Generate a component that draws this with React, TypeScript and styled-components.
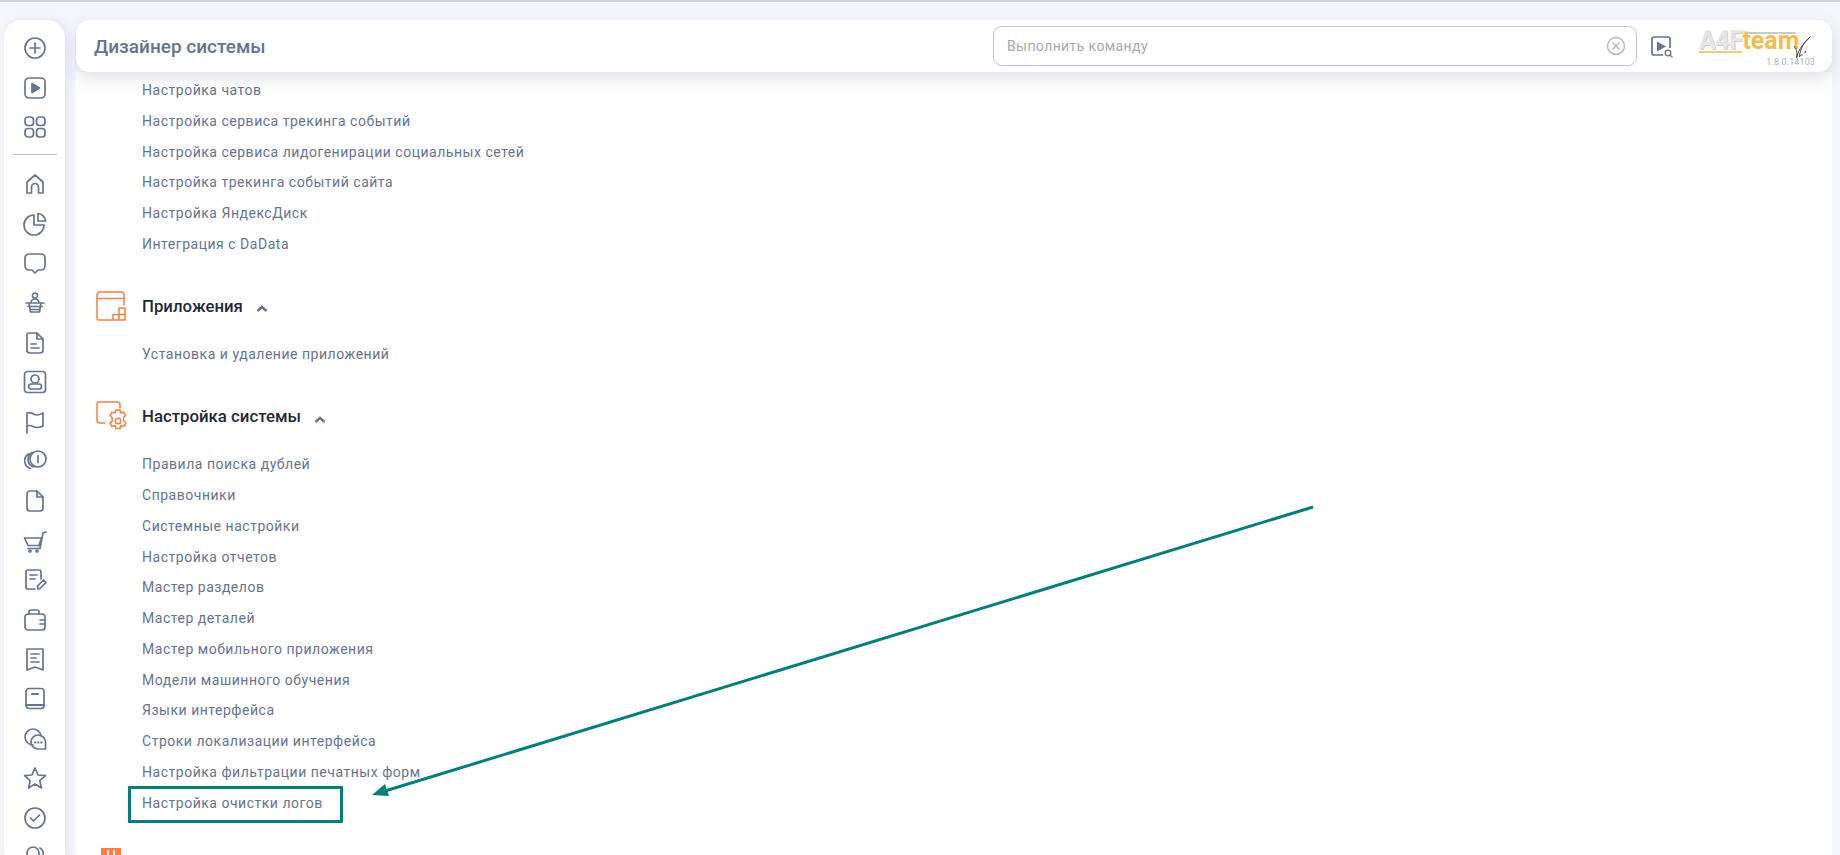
import React from 'react';
import styled, { createGlobalStyle } from 'styled-components';

const GlobalStyle = createGlobalStyle`
  html, body {
    margin: 0;
    padding: 0;
    height: 100%;
    overflow: hidden;
    background: #f5f6fb;
    font-family: Roboto, "Liberation Sans", sans-serif;
  }
  #root {
    height: 100%;
  }
`;

const ICON = '#667391';
const ORANGE = '#fa7d42';
const TEAL = '#037f78';

const sideIcons: React.ReactNode[][] = [
  [
    <circle key="a" cx="12" cy="12" r="10" />,
    <path key="b" d="M12 7v10M7 12h10" />,
  ],
  [
    <rect key="a" x="2" y="2" width="20" height="20" rx="4" />,
    <path key="b" d="M9 7.500l7.500 4.500L9 16.500z" fill={ICON} />,
  ],
  [
    <rect key="a" x="2" y="2" width="8.500" height="8.500" rx="3" />,
    <rect key="b" x="13.500" y="2" width="8.500" height="8.500" rx="3" />,
    <rect key="c" x="2" y="13.500" width="8.500" height="8.500" rx="3" />,
    <rect key="d" x="13.500" y="13.500" width="8.500" height="8.500" rx="3" />,
  ],
];

const navIcons: React.ReactNode[][] = [
  [<path key="a" d="M4 21V10l8-7 8 7v11h-4.500v-6a3.500 3.500 0 0 0-7 0v6z" />],
  [
    <path key="a" d="M11 3a10 10 0 1 0 10 10H11z" />,
    <path key="b" d="M15 1.500a8 8 0 0 1 7.500 7.500H15z" />,
  ],
  [<path key="a" d="M6 3h12a4 4 0 0 1 4 4v8a4 4 0 0 1-4 4h-3l-3 3-3-3H6a4 4 0 0 1-4-4V7a4 4 0 0 1 4-4z" />],
  [
    <circle key="a" cx="12" cy="4.500" r="2.500" />,
    <path key="b" d="M8 12a4 4 0 0 1 8 0M3 12h18M5 15.500h14M6 12l1.500 9h9L18 12M8 18.500h8" />,
  ],
  [
    <path key="a" d="M5 2h9l6 6v11a3 3 0 0 1-3 3H7a3 3 0 0 1-3-3V3z" />,
    <path key="b" d="M14 2v6h6M8 13h5M8 17h8" />,
  ],
  [
    <rect key="a" x="1.500" y="1.500" width="21" height="21" rx="3" />,
    <circle key="b" cx="12" cy="9" r="4" />,
    <path key="c" d="M8 19a2.500 2.500 0 0 1 0-5h8a2.500 2.500 0 0 1 0 5z" />,
  ],
  [<path key="a" d="M4 23V3c5-2 6 2 10 2 2 0 4-1 6-2v13c-2 1-4 1.500-6 1.500-4 0-5-3.500-10-1.500" />],
  [
    <circle key="a" cx="15" cy="10" r="8" />,
    <path key="b" d="M15 6.500v7" />,
    <path key="c" d="M9 3.500a8 8 0 0 0 1.500 14.500M5.500 5a8 8 0 0 0 2 14.500" />,
  ],
  [
    <path key="a" d="M7 2h7l6 6v11a3 3 0 0 1-3 3H7a3 3 0 0 1-3-3V5a3 3 0 0 1 3-3z" />,
    <path key="b" d="M14 2v6h6" />,
  ],
  [
    <path key="a" d="M1.500 9h17l-2.500 7.500H5zM5 19.500h12l3-15.500 3-1" />,
    <circle key="b" cx="7" cy="22" r="1" />,
    <circle key="c" cx="14" cy="22" r="1" />,
  ],
  [
    <path key="a" d="M18 11V4a2 2 0 0 0-2-2H5a2 2 0 0 0-2 2v15a2 2 0 0 0 2 2h7" />,
    <path key="b" d="M7 7h7M7 11h5M15 21l-.5-3 6-6 2.500 2.500-6 6z" />,
  ],
  [
    <path key="a" d="M2 9a3 3 0 0 1 3-3h14a3 3 0 0 1 3 3v10a3 3 0 0 1-3 3H5a3 3 0 0 1-3-3z" />,
    <path key="b" d="M6 6V4a2 2 0 0 1 2-2h6a2 2 0 0 1 2 2v2M22 12h-5M22 16h-5" />,
  ],
  [
    <path key="a" d="M4 2h16v21l-8-3-8 3z" />,
    <path key="b" d="M8 7h8M8 11h5M8 15h8" />,
  ],
  [
    <rect key="a" x="3" y="1.500" width="18" height="20" rx="3" />,
    <path key="b" d="M3 18h18M9 7h6" strokeWidth="2.200" />,
  ],
  [
    <path key="a" d="M10 18a8 8 0 1 1 8-9" />,
    <path key="b" d="M15 8a7.500 7.500 0 0 1 7.500 7.500V22h-7.500a7 7 0 0 1 0-14z" />,
    <path key="c" d="M12 15.500h.6M15 15.500h.6M18 15.500h.6" strokeWidth="1.800" />,
  ],
  [<path key="a" d="M12 2l3 7 7.500.7-5.700 5 1.700 7.300-6.500-3.900-6.500 3.900 1.700-7.300-5.700-5L9 9z" />],
  [
    <circle key="a" cx="12" cy="12" r="10" />,
    <path key="b" d="M7.500 12l3 3 6-6" />,
  ],
  [
    <circle key="a" cx="10" cy="8" r="6" />,
    <path key="b" d="M17 3a6 6 0 0 1 2 9" />,
  ],
];

const Page = styled.div`
  height: 855px;
  box-sizing: border-box;
  border-top: 2px solid #d2d3d6;
  padding: 18px 8px 0 4px;
  display: flex;
  gap: 11px;
  overflow: hidden;
  position: relative;
`;

const Sidebar = styled.nav`
  width: 61px;
  flex: none;
  background: #fff;
  border-radius: 18px 18px 0 0;
  box-shadow: 3px 0 9px rgba(110, 120, 165, 0.14);
  padding-top: 16px;
  box-sizing: border-box;
  display: flex;
  flex-direction: column;
  align-items: center;
  overflow: hidden;
`;

const SideGroup = styled.div`
  display: flex;
  flex-direction: column;
  align-items: center;
  gap: 15.600px;
  flex: none;
`;

const Divider = styled.hr`
  width: 44px;
  flex: none;
  border: 0;
  border-top: 1px solid #b9bbc1;
  margin: 15px 0 17px;
`;

const SideIcon = styled.svg`
  width: 24px;
  height: 24px;
  flex: none;
  fill: none;
  stroke: ${ICON};
  stroke-width: 1.700;
  stroke-linecap: round;
  stroke-linejoin: round;
`;

const Main = styled.main`
  flex: 1;
  min-width: 0;
  display: flex;
  flex-direction: column;
  position: relative;
`;

const Header = styled.header`
  height: 52px;
  flex: none;
  background: #fff;
  border-radius: 14px;
  box-shadow: 0 6px 16px rgba(90, 100, 125, 0.2);
  display: flex;
  align-items: center;
  padding: 0 20px 0 18px;
  position: relative;
  z-index: 1;
`;

const Title = styled.h1`
  flex: 1;
  margin: 0;
  font-size: 19px;
  font-weight: 500;
  color: ${ICON};
`;

const SearchBox = styled.div`
  width: 644px;
  height: 40px;
  box-sizing: border-box;
  border: 1px solid #c5c5c5;
  border-radius: 9px;
  display: flex;
  align-items: center;
  justify-content: space-between;
  padding: 0 10px 0 13px;
`;

const SearchInput = styled.input`
  flex: 1;
  border: 0;
  outline: 0;
  padding: 0;
  background: none;
  font: 400 14px Roboto, sans-serif;
  letter-spacing: 0.4px;
  &::placeholder {
    color: #a9a9a9;
    opacity: 1;
  }
`;

const ClearIcon = styled.svg`
  width: 20px;
  height: 20px;
  fill: none;
  stroke: #b4b4b4;
  stroke-width: 1.300;
`;

const RunIcon = styled.svg`
  width: 24px;
  height: 24px;
  margin: 2px 25px 0 13px;
  flex: none;
  fill: none;
`;

const Logo = styled.div`
  width: 113px;
  height: 44px;
  flex: none;
  position: relative;
`;

const LogoText = styled.div`
  position: absolute;
  left: 0;
  top: 5px;
  display: flex;
  font-size: 25px;
  line-height: 24px;
  font-weight: 700;
  white-space: nowrap;
`;

const LogoGray = styled.span`
  height: 22px;
  color: #e4e5e8;
  border-bottom: 2px solid #f3cc72;
  text-shadow: 1px 1px 1px #c9c9cc;
  letter-spacing: -0.5px;
`;

const LogoTeam = styled.span`
  color: #f3bd4e;
`;

const LogoBar = styled.div`
  position: absolute;
  left: 48px;
  top: 8px;
  width: 49px;
  height: 2px;
  background: #c9c9c9;
`;

const LogoVersion = styled.span`
  position: absolute;
  right: -3px;
  top: 33px;
  font-size: 9px;
  letter-spacing: 0.1px;
  color: #b0b0b0;
`;

const Signature = styled.svg`
  position: absolute;
  left: 94px;
  top: 11px;
  width: 20px;
  height: 24px;
  fill: none;
  stroke: #333;
  stroke-width: 1;
`;

const Content = styled.div`
  flex: 1;
  min-height: 0;
  background: #fff;
  padding: 3px 0 0 66px;
`;

const LinkList = styled.ul`
  list-style: none;
  margin: 0;
  padding: 0;
`;

const LinkItem = styled.li`
  height: 30.750px;
  line-height: 30.750px;
  font-size: 14px;
  letter-spacing: 0.52px;
  color: #667391;
  white-space: nowrap;
`;

const Section = styled.section<{ $top: number }>`
  margin-top: ${(p) => p.$top}px;
`;

const SectionHead = styled.div`
  display: flex;
  align-items: center;
  height: 32px;
  margin: 0 0 17px -47px;
`;

const SectionIcon = styled.svg`
  width: 32px;
  height: 32px;
  flex: none;
  margin-right: 15px;
  fill: none;
  stroke: ${ORANGE};
  stroke-width: 1.500;
  stroke-linecap: round;
  stroke-linejoin: round;
`;

const SectionTitle = styled.h2`
  margin: 0;
  font-size: 16.800px;
  font-weight: 500;
  color: #1f2937;
`;

const Chevron = styled.svg`
  width: 12px;
  height: 7px;
  margin: 6px 0 0 13px;
  fill: none;
  stroke: ${ICON};
  stroke-width: 2.500;
`;

const Callout = styled.div`
  position: absolute;
  left: 128px;
  top: 784px;
  width: 215px;
  height: 37px;
  box-sizing: border-box;
  border: 3px solid ${TEAL};
  border-radius: 1px;
`;

const Arrow = styled.svg`
  position: absolute;
  left: 0;
  top: -2px;
  width: 1840px;
  height: 855px;
  pointer-events: none;
`;

const topLinks = [
  'Настройка чатов',
  'Настройка сервиса трекинга событий',
  'Настройка сервиса лидогенирации социальных сетей',
  'Настройка трекинга событий сайта',
  'Настройка ЯндексДиск',
  'Интеграция с DaData',
];

const systemLinks = [
  'Правила поиска дублей',
  'Справочники',
  'Системные настройки',
  'Настройка отчетов',
  'Мастер разделов',
  'Мастер деталей',
  'Мастер мобильного приложения',
  'Модели машинного обучения',
  'Языки интерфейса',
  'Строки локализации интерфейса',
  'Настройка фильтрации печатных форм',
  'Настройка очистки логов',
];

function ChevronUp() {
  return (
    <Chevron viewBox="0 0 12 7">
      <path d="M1.500 6L6 2l4.500 4" />
    </Chevron>
  );
}

export default function App() {
  return (
    <>
      <GlobalStyle />
      <Page>
        <Sidebar>
          <SideGroup>
            {sideIcons.map((icon, i) => (
              <SideIcon key={i} viewBox="0 0 24 24">
                {icon}
              </SideIcon>
            ))}
          </SideGroup>
          <Divider />
          <SideGroup>
            {navIcons.map((icon, i) => (
              <SideIcon key={i} viewBox="0 0 24 24">
                {icon}
              </SideIcon>
            ))}
          </SideGroup>
        </Sidebar>
        <Main>
          <Header>
            <Title>Дизайнер системы</Title>
            <SearchBox>
              <SearchInput placeholder="Выполнить команду" />
              <ClearIcon viewBox="0 0 20 20">
                <circle cx="10" cy="10" r="8.500" />
                <path d="M6.500 6.500l7 7M13.500 6.500l-7 7" />
              </ClearIcon>
            </SearchBox>
            <RunIcon viewBox="0 0 24 24">
              <path
                d="M13 20H4a2 2 0 0 1-2-2V4a2 2 0 0 1 2-2h14a2 2 0 0 1 2 2v9"
                stroke={ICON}
                strokeWidth="1.700"
              />
              <path d="M7 6.500l9 5-9 5z" fill={ICON} />
              <circle cx="18" cy="18" r="2.800" stroke={ICON} strokeWidth="1.300" />
              <path d="M20 20l2.500 2.500" stroke={ICON} strokeWidth="1.300" />
            </RunIcon>
            <Logo>
              <LogoText>
                <LogoGray>A4F</LogoGray>
                <LogoTeam>team</LogoTeam>
              </LogoText>
              <LogoBar />
              <LogoVersion>1.8.0.14103</LogoVersion>
              <Signature viewBox="0 0 22 26">
                <path d="M1 12c3 3 4 8 3 13 1-6 5-14 15-23-7 5-11 13-12 22 1-2 3-3 4-2M13 20l1-3M15 14h.5" />
              </Signature>
            </Logo>
          </Header>
          <Content>
            <LinkList>
              {topLinks.map((t) => (
                <LinkItem key={t}>{t}</LinkItem>
              ))}
            </LinkList>
            <Section $top={30}>
              <SectionHead>
                <SectionIcon viewBox="0 0 32 32">
                  <path d="M29 15V5a3 3 0 0 0-3-3H5a3 3 0 0 0-3 3v23a2 2 0 0 0 2 2h13" />
                  <path d="M2 8.500h27M18 30v-5.500h6V18h6v12zM24 24.500h6M24 24.500V30" />
                </SectionIcon>
                <SectionTitle>Приложения</SectionTitle>
                <ChevronUp />
              </SectionHead>
              <LinkList>
                <LinkItem>Установка и удаление приложений</LinkItem>
              </LinkList>
            </Section>
            <Section $top={31}>
              <SectionHead>
                <SectionIcon viewBox="0 0 32 32">
                  <path d="M25 8V5a3 3 0 0 0-3-3H4a2 2 0 0 0-2 2v16a3 3 0 0 0 3 3h5" />
                  <circle cx="21" cy="21" r="2.800" transform="translate(2 0)" />
                  <path
                    transform="translate(2 0)"
                    d="M19 10h4l.8 3 2.700-1 2 3.400-2 2.100.2 3.500 2.300 2-2 3.400-3-1-1 3.100h-4l-1-3-3 1-2-3.400 2.200-2-.2-3.600-2-2 2-3.400 3 1z"
                  />
                </SectionIcon>
                <SectionTitle>Настройка системы</SectionTitle>
                <ChevronUp />
              </SectionHead>
              <LinkList>
                {systemLinks.map((t) => (
                  <LinkItem key={t}>{t}</LinkItem>
                ))}
              </LinkList>
            </Section>
            <Section $top={28}>
              <SectionHead>
                <SectionIcon viewBox="0 0 32 32">
                  <path d="M6 2h20v10H6z" fill={ORANGE} stroke="none" />
                  <path d="M13 5v7M19 5v7" stroke="#fff" strokeWidth="2" />
                </SectionIcon>
              </SectionHead>
            </Section>
          </Content>
        </Main>
        <Callout />
        <Arrow viewBox="0 0 1840 855">
          <path d="M1313 507L385 791" stroke={TEAL} strokeWidth="3" />
          <path d="M372 795l13-11 4 12z" fill={TEAL} />
        </Arrow>
      </Page>
    </>
  );
}
